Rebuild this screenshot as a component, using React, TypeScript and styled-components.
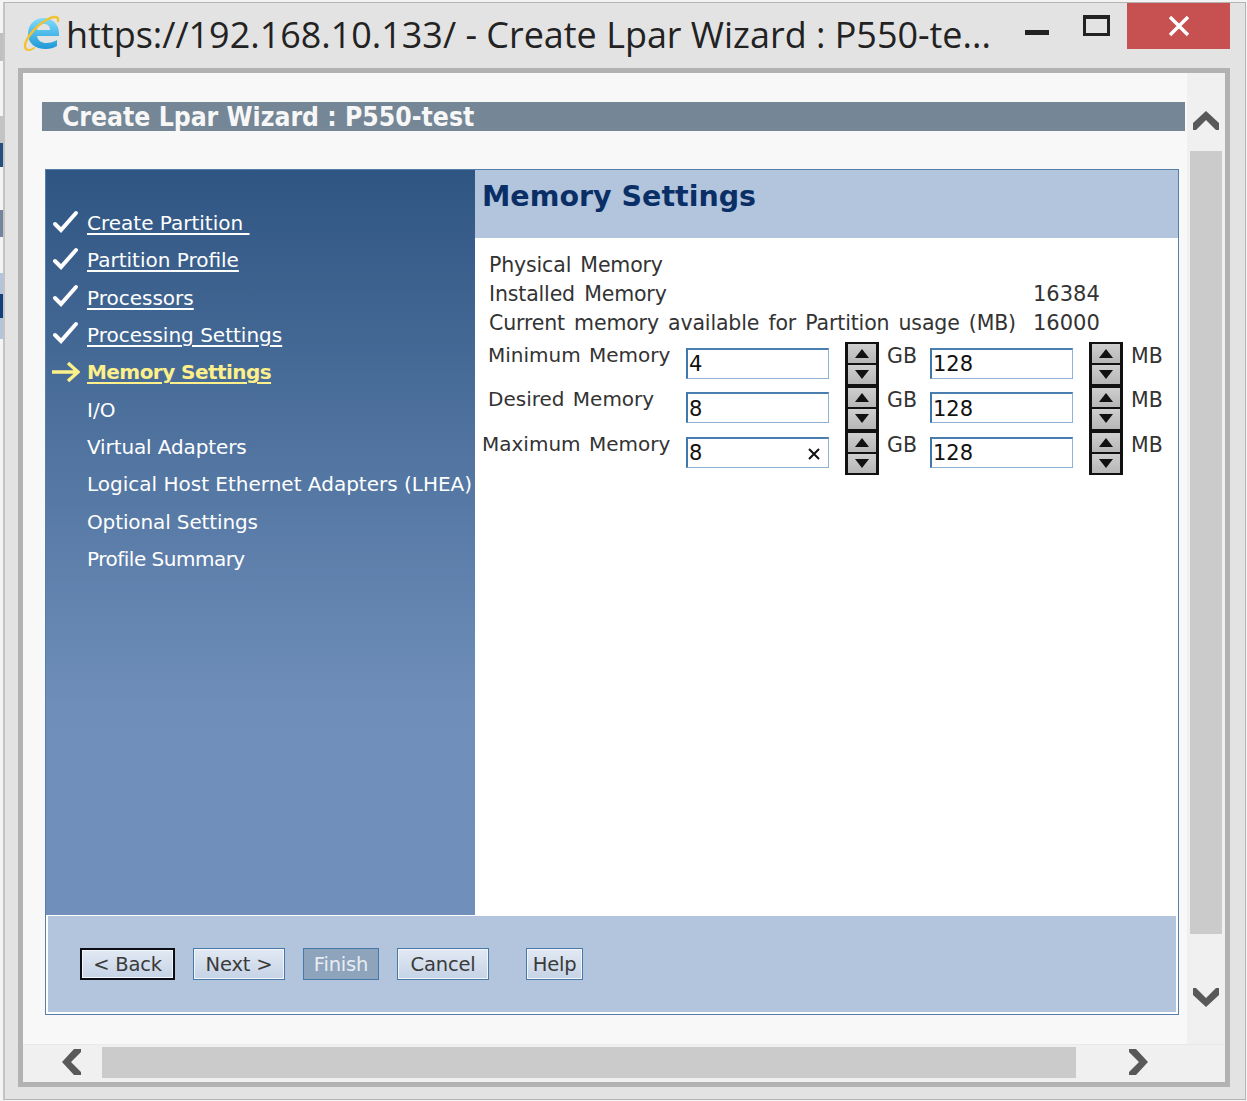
import React from "react";
import styled, { createGlobalStyle } from "styled-components";

const GlobalStyle = createGlobalStyle`
  html, body {
    margin: 0;
    padding: 0;
    background: #f4f4f4;
  }
  body {
    font-family: "DejaVu Sans", Verdana, sans-serif;
  }
`;

// sliver of the page behind the popup, visible along the left edge
const Desktop = styled.div`
  width: 1247px;
  height: 1101px;
  box-sizing: border-box;
  padding: 2px 0 0 3px;
  overflow: hidden;
  background-color: #f4f4f4;
  background-repeat: no-repeat;
  background-size: 3px 100%;
  background-image: linear-gradient(
    to bottom,
    #f4f4f4 0 33px,
    #c0c0c0 33px 61px,
    #f4f4f4 61px 116px,
    #c4c4c4 116px 143px,
    #24507f 143px 167px,
    #f4f4f4 167px 210px,
    #73859c 210px 237px,
    #f4f4f4 237px 273px,
    #b3c4dd 273px 294px,
    #12407a 294px 318px,
    #b3c4dd 318px 339px,
    #f4f4f4 339px 100%
  );
`;

const Window = styled.div`
  width: 1243px;
  height: 1098px;
  box-sizing: border-box;
  display: flex;
  flex-direction: column;
  background: #e3e3e3;
  border: 1px solid #b4b4b4;
  border-left: 2px solid #c4c4c4;
`;

const TitleBar = styled.div`
  height: 65px;
  flex: none;
  display: flex;
  align-items: flex-start;
  padding-left: 18px;
`;

const TitleText = styled.div`
  flex: 1;
  margin-left: 5px;
  margin-top: 7px;
  font-family: "Open Sans", sans-serif;
  font-size: 35.95px;
  line-height: 50px;
  color: #222;
  white-space: nowrap;
`;

const MinimizeButton = styled.div`
  width: 24px;
  height: 5px;
  margin-top: 27px;
  margin-right: 34px;
  background: #222;
`;

const MaximizeButton = styled.div`
  width: 27px;
  height: 21px;
  box-sizing: border-box;
  margin-top: 12px;
  margin-right: 17px;
  border: 3px solid #222;
  border-top-width: 4px;
`;

const CloseButton = styled.div`
  width: 103px;
  height: 46px;
  margin-right: 15px;
  background: #c75050;
  display: flex;
  align-items: center;
  justify-content: center;
`;

const Frame = styled.div`
  width: 1212px;
  height: 1019px;
  margin-left: 13px;
  box-sizing: border-box;
  border: 5px solid #b2b2b2;
  display: grid;
  grid-template-columns: 1fr 38px;
  grid-template-rows: 971px 38px;
  background: #f0f0f0;
`;

const Page = styled.div`
  background: #f8f8f8;
  padding: 29px 0 0 19px;
  box-sizing: border-box;
  min-width: 0;
`;

const PageHeading = styled.div`
  width: 1143px;
  height: 29px;
  padding-left: 20px;
  box-sizing: border-box;
  background: #758696;
  color: #f7f7f7;
  font-family: "DejaVu Sans Condensed", "DejaVu Sans", sans-serif;
  font-size: 26.3px;
  font-weight: 700;
  line-height: 31px;
  white-space: nowrap;
  overflow: hidden;
`;

const Wizard = styled.div`
  width: 1134px;
  height: 846px;
  margin: 38px 0 0 3px;
  box-sizing: border-box;
  border: 1px solid #557ea9;
  display: grid;
  grid-template-columns: 429px 1fr;
  grid-template-rows: 745px 99px;
  background: #fff;
`;

const Sidebar = styled.nav`
  background: linear-gradient(to bottom, #2f5582 0%, #6f8fba 72%, #7090bb 100%);
  padding-top: 34.5px;
  box-sizing: border-box;
`;

const NavRow = styled.div<{ $tight?: number }>`
  height: 37.3px;
  display: flex;
  align-items: center;
  padding-left: 41px;
  position: relative;
  font-size: 20px;
  letter-spacing: ${({ $tight }) => $tight ?? 0}px;
  white-space: nowrap;
  color: #fff;
`;

const NavIcon = styled.span<{ $top: number }>`
  position: absolute;
  left: 6px;
  top: ${({ $top }) => $top}px;
  display: flex;
`;

const NavLink = styled.a<{ $active?: boolean }>`
  color: ${({ $active }) => ($active ? "#fdf08a" : "#fff")};
  font-weight: ${({ $active }) => ($active ? 700 : 400)};
  letter-spacing: ${({ $active }) => ($active ? "-0.55px" : "0")};
  text-decoration: underline;
  text-underline-offset: 3px;
`;

const Main = styled.main`
  min-width: 0;
  color: #333;
`;

const MainHeader = styled.h1`
  margin: 0;
  height: 68px;
  padding: 8px 0 0 7px;
  box-sizing: border-box;
  background: #b3c4dd;
  color: #0a2f66;
  font-size: 28.5px;
  line-height: 38px;
  font-weight: 700;
`;

const InfoBlock = styled.div`
  padding: 13px 0 0 14px;
  font-size: 20.5px;
  letter-spacing: -0.15px;
  word-spacing: 2.8px;
  line-height: 29px;
`;

const InfoRow = styled.div`
  display: grid;
  grid-template-columns: 544px auto;
  white-space: nowrap;
`;

const InfoValue = styled.span`
  font-size: 21px;
  letter-spacing: 0;
`;

const MemoryGrid = styled.div`
  margin-top: 3.5px;
  display: grid;
  grid-template-columns: 211px 143px 16px 34px 51px 143px 16px 34px auto;
  grid-auto-rows: 44.5px;
  font-size: 20px;
  word-spacing: 2px;
  white-space: nowrap;
`;

const MemoryLabel = styled.div<{ $shift?: number }>`
  padding: 0 0 0 ${({ $shift }) => 13 + ($shift ?? 0)}px;
  line-height: 26px;
`;

const TextField = styled.div`
  height: 31px;
  margin-top: 6px;
  box-sizing: border-box;
  border: 1px solid #8fb1d6;
  border-top: 2px solid #4a7eb0;
  border-left: 2px solid #3f78ad;
  background: #fff;
  color: #111;
  font-size: 21px;
  line-height: 31px;
  padding: 2px 0 0 1px;
  display: flex;
  align-items: center;
  justify-content: space-between;
`;

const ClearMark = styled.span`
  display: flex;
  margin-right: 7px;
`;

const Spinner = styled.div`
  grid-column: 4;
  width: 34px;
  height: 44.5px;
  box-sizing: border-box;
  background: #111;
  padding: 2px 3px;
  display: flex;
  flex-direction: column;
  gap: 2px;
`;

const SecondSpinner = styled(Spinner)`
  grid-column: 8;
`;

const SpinButton = styled.div`
  flex: 1;
  background: linear-gradient(to bottom, #cfcfcf, #b6b6b6);
  display: flex;
  align-items: center;
  justify-content: center;
`;

const Unit = styled.div`
  padding-left: 8px;
  font-size: 20.5px;
  line-height: 29px;
`;

const Footer = styled.div`
  grid-column: 1 / -1;
  background: #b3c4dd;
  border: 2px solid #fff;
  border-top-width: 1px;
  box-sizing: border-box;
  padding: 32px 0 0 32px;
  display: flex;
  align-items: flex-start;
  gap: 18px;
`;

const WizardButton = styled.button<{ $width: number; $gapLeft?: number; $focused?: boolean; $disabled?: boolean }>`
  width: ${({ $width }) => $width}px;
  height: 32px;
  margin-left: ${({ $gapLeft }) => $gapLeft ?? 0}px;
  padding: 0;
  box-sizing: border-box;
  font-family: inherit;
  font-size: 19.5px;
  letter-spacing: -0.2px;
  border: ${({ $focused }) => ($focused ? "2px solid #0c0c14" : "1px solid #4679a8")};
  box-shadow: ${({ $disabled }) => ($disabled ? "none" : "inset 0 0 0 1px #f2f6fb")};
  background: ${({ $disabled }) => ($disabled ? "#8ea3bc" : "linear-gradient(to bottom, #e2e9f3, #c5d3e6)")};
  color: ${({ $disabled }) => ($disabled ? "#e8edf3" : "#3a3a3a")};
`;

const VerticalBar = styled.div`
  display: flex;
  flex-direction: column;
  align-items: center;
  padding: 0 1px;
`;

const ArrowBox = styled.div<{ $height: number; $top: number }>`
  height: ${({ $height }) => $height}px;
  box-sizing: border-box;
  padding-top: ${({ $top }) => $top}px;
  flex: none;
  display: flex;
  align-items: center;
  justify-content: center;
`;

const VerticalThumb = styled.div`
  width: 32px;
  height: 783px;
  flex: none;
  background: #cbcbcb;
`;

const HorizontalBar = styled.div`
  grid-column: 1 / -1;
  display: flex;
  align-items: center;
  background: #f0f0f0;
  border-top: 1px solid #e9e9e9;
  box-sizing: border-box;
  padding-bottom: 3px;
`;

const HorizontalThumb = styled.div`
  width: 974px;
  height: 31px;
  background: #cbcbcb;
`;

const ArrowSlot = styled.div<{ $width: number; $left: number }>`
  width: ${({ $width }) => $width}px;
  box-sizing: border-box;
  padding-left: ${({ $left }) => $left}px;
  flex: none;
  display: flex;
  justify-content: center;
`;

const IeLogo = () => (
  <svg width="38" height="40" viewBox="0 0 38 40" style={{ flex: "none", marginTop: 10 }}>
    <defs>
      <linearGradient id="ie" x1="0" y1="0" x2="0" y2="1">
        <stop offset="0" stopColor="#7fdcfa" />
        <stop offset="1" stopColor="#1e98d8" />
      </linearGradient>
    </defs>
    <path
      fillRule="evenodd"
      d="M36 23H14c1 5 5 7 9 7 4 0 8-1 11-3v6c-3 2-7 3-11 3C12 36 5 30 5 21 5 11 12 5 21 5c9 0 15 7 15 15zM14 17h13c0-4-2.500-6-6-6-3.500 0-6.500 2-7 6z"
      fill="url(#ie)"
    />
    <path d="M3 36C-1 31 9 15 25 6c6-3 11-3 10 2" fill="none" stroke="#f2c230" strokeWidth="2.4" strokeLinecap="round" />
    <path d="M3 36c2 2 5 1 8-1" fill="none" stroke="#f2c230" strokeWidth="2" strokeLinecap="round" />
  </svg>
);

const CheckIcon = () => (
  <svg width="27" height="24" viewBox="0 0 27 24">
    <path d="M3 14l6 6L24 3" fill="none" stroke="#fff" strokeWidth="4" strokeLinecap="round" />
  </svg>
);

const YellowArrow = () => (
  <svg width="28" height="24" viewBox="0 0 28 24">
    <path d="M0 12h25M16 3l10 9-10 9" fill="none" stroke="#fdf08a" strokeWidth="3.4" />
  </svg>
);

const SpinTriangle = ({ down }: { down?: boolean }) => (
  <svg width="16" height="9" viewBox="0 0 16 9">
    <path d={down ? "M1 0h14L8 9z" : "M8 0l7 9H1z"} fill="#111" />
  </svg>
);

const Chevron = ({ dir }: { dir: "up" | "down" | "left" | "right" }) => {
  const rot = { up: 0, right: 90, down: 180, left: 270 }[dir];
  return (
    <svg width="28" height="28" viewBox="0 0 28 28" style={{ transform: `rotate(${rot}deg)` }}>
      <path d="M1 15L14 3l13 12v7h-3L14 12 4 22H1z" fill="#595959" />
    </svg>
  );
};

const steps = [
  { label: "Create Partition\u00a0", done: true },
  { label: "Partition Profile", done: true },
  { label: "Processors", done: true },
  { label: "Processing Settings", done: true },
  { label: "Memory Settings", active: true },
  { label: "I/O" },
  { label: "Virtual Adapters", tight: -0.12 },
  { label: "Logical Host Ethernet Adapters (LHEA)" },
  { label: "Optional Settings", tight: -0.12 },
  { label: "Profile Summary", tight: -0.5 },
];

const memoryRows = [
  { label: "Minimum Memory", gb: "4", mb: "128" },
  { label: "Desired Memory", gb: "8", mb: "128" },
  { label: "Maximum Memory", gb: "8", mb: "128", shift: -6, clear: true },
];

const Spin = ({ second }: { second?: boolean }) => {
  const Box = second ? SecondSpinner : Spinner;
  return (
    <Box>
      <SpinButton>
        <SpinTriangle />
      </SpinButton>
      <SpinButton>
        <SpinTriangle down />
      </SpinButton>
    </Box>
  );
};

const App = () => {
  return (
    <>
      <GlobalStyle />
      <Desktop>
        <Window>
          <TitleBar>
            <IeLogo />
            <TitleText>https://192.168.10.133/ - Create Lpar Wizard : P550-te...</TitleText>
            <MinimizeButton />
            <MaximizeButton />
            <CloseButton>
              <svg width="24" height="24" viewBox="0 0 24 24">
                <path d="M3 3l18 18M21 3L3 21" stroke="#fff" strokeWidth="3.4" />
              </svg>
            </CloseButton>
          </TitleBar>
          <Frame>
            <Page>
              <PageHeading>Create Lpar Wizard : P550-test</PageHeading>
              <Wizard>
                <Sidebar>
                  {steps.map((s) => (
                    <NavRow key={s.label} $tight={s.tight}>
                      {s.done && (
                        <NavIcon $top={5}>
                          <CheckIcon />
                        </NavIcon>
                      )}
                      {s.active && (
                        <NavIcon $top={6}>
                          <YellowArrow />
                        </NavIcon>
                      )}
                      {s.done || s.active ? <NavLink $active={s.active}>{s.label}</NavLink> : s.label}
                    </NavRow>
                  ))}
                </Sidebar>
                <Main>
                  <MainHeader>Memory Settings</MainHeader>
                  <InfoBlock>
                    <InfoRow>Physical Memory</InfoRow>
                    <InfoRow>
                      <span>Installed Memory</span>
                      <InfoValue>16384</InfoValue>
                    </InfoRow>
                    <InfoRow>
                      <span>Current memory available for Partition usage (MB)</span>
                      <InfoValue>16000</InfoValue>
                    </InfoRow>
                  </InfoBlock>
                  <MemoryGrid>
                    {memoryRows.map((r) => (
                      <React.Fragment key={r.label}>
                        <MemoryLabel $shift={r.shift}>{r.label}</MemoryLabel>
                        <TextField>
                          {r.gb}
                          {r.clear && (
                            <ClearMark>
                              <svg width="14" height="14" viewBox="0 0 14 14">
                                <path d="M2 2l10 10M12 2L2 12" stroke="#111" strokeWidth="2" />
                              </svg>
                            </ClearMark>
                          )}
                        </TextField>
                        <div />
                        <Spin />
                        <Unit>GB</Unit>
                        <TextField>{r.mb}</TextField>
                        <div />
                        <Spin second />
                        <Unit>MB</Unit>
                      </React.Fragment>
                    ))}
                  </MemoryGrid>
                </Main>
                <Footer>
                  <WizardButton $width={95} $focused>&lt; Back</WizardButton>
                  <WizardButton $width={92}>Next &gt;</WizardButton>
                  <WizardButton $width={76} $disabled>Finish</WizardButton>
                  <WizardButton $width={92}>Cancel</WizardButton>
                  <WizardButton $width={57} $gapLeft={19}>Help</WizardButton>
                </Footer>
              </Wizard>
            </Page>
            <VerticalBar>
              <ArrowBox $height={78} $top={20}>
                <Chevron dir="up" />
              </ArrowBox>
              <VerticalThumb />
              <ArrowBox $height={110} $top={13}>
                <Chevron dir="down" />
              </ArrowBox>
            </VerticalBar>
            <HorizontalBar>
              <ArrowSlot $width={79} $left={20}>
                <Chevron dir="left" />
              </ArrowSlot>
              <HorizontalThumb />
              <ArrowSlot $width={122} $left={0}>
                <Chevron dir="right" />
              </ArrowSlot>
            </HorizontalBar>
          </Frame>
        </Window>
      </Desktop>
    </>
  );
};

export default App;
